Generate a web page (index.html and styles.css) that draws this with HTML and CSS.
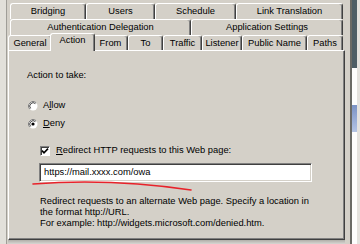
FILE: index.html
```html
<!DOCTYPE html>
<html>
<head>
<meta charset="utf-8">
<title>Action</title>
<link rel="stylesheet" href="styles.css">
</head>
<body>
<div class="screen">
  <div class="edge-left"></div>
  <div class="dialog">
    <div class="tabrow row-back row-first">
      <div class="tab w-bridging">Bridging</div>
      <div class="tab w-users">Users</div>
      <div class="tab w-schedule">Schedule</div>
      <div class="tab w-link">Link Translation</div>
    </div>
    <div class="tabrow row-back">
      <div class="tab w-auth">Authentication Delegation</div>
      <div class="tab w-app">Application Settings</div>
    </div>
    <div class="tabrow row-front">
      <div class="tab w-general">General</div>
      <div class="tab tab-active w-action">Action</div>
      <div class="tab w-from">From</div>
      <div class="tab w-to">To</div>
      <div class="tab w-traffic">Traffic</div>
      <div class="tab w-listener">Listener</div>
      <div class="tab w-public">Public Name</div>
      <div class="tab w-paths">Paths</div>
    </div>
    <div class="panel">
      <div class="label">Action to take:</div>
      <div class="option opt-allow">
        <svg class="radio" width="10" height="10" viewBox="0 0 10 10">
          <circle cx="5" cy="5" r="4.5" fill="#fff"/>
          <path d="M1.82 8.18 A4.5 4.5 0 0 1 8.18 1.82" fill="none" stroke="#808080" stroke-width="1"/>
          <path d="M2.6 7.4 A3.4 3.4 0 0 1 7.4 2.6" fill="none" stroke="#404040" stroke-width="1"/>
        </svg>
        <span>A<u>l</u>low</span>
      </div>
      <div class="option opt-deny">
        <svg class="radio" width="10" height="10" viewBox="0 0 10 10">
          <circle cx="5" cy="5" r="4.5" fill="#fff"/>
          <path d="M1.82 8.18 A4.5 4.5 0 0 1 8.18 1.82" fill="none" stroke="#808080" stroke-width="1"/>
          <path d="M2.6 7.4 A3.4 3.4 0 0 1 7.4 2.6" fill="none" stroke="#404040" stroke-width="1"/>
          <circle cx="5" cy="5" r="1.6" fill="#000"/>
        </svg>
        <span><u>D</u>eny</span>
      </div>
      <div class="check-row">
        <span class="checkbox">
          <svg width="8" height="8" viewBox="0 0 8 8"><path d="M1 3.6 L3 5.8 L7 1.6" fill="none" stroke="#000" stroke-width="1.6"/></svg>
        </span>
        <span><u>R</u>edirect HTTP requests to this Web page:</span>
      </div>
      <div class="textbox">https://mail.xxxx.com/owa</div>
      <div class="desc">Redirect requests to an alternate Web page. Specify a location in<br>the format http://URL.<br>For example: http://widgets.microsoft.com/denied.htm.</div>
    </div>
    <div class="shadow-bottom"></div>
  </div>
  <div class="edge-right">
    <div class="edge-gap"></div>
    <div class="edge-line"></div>
    <div class="edge-strip"></div>
    <div class="edge-light"></div>
  </div>
  <svg class="annotation" width="170" height="16" viewBox="28 177 170 16">
    <path d="M33 184 Q110 178 191 190" fill="none" stroke="#e8222a" stroke-width="1.6" stroke-linecap="round"/>
  </svg>
</div>
</body>
</html>
```

FILE: styles.css
```css
* { box-sizing: border-box; }
html, body { margin: 0; padding: 0; }
body {
  width: 360px;
  height: 244px;
  overflow: hidden;
  background: #d4d0c8;
  font-family: "Liberation Sans", Arial, sans-serif;
  font-size: 9.35px;
  color: #000;
}
.screen {
  position: relative;
  display: flex;
  width: 360px;
  height: 244px;
}
.edge-left {
  width: 8px;
  flex: 0 0 8px;
  background: linear-gradient(to right, #e2e0da 0 6px, #a09e98 6px 7px, #d4d0c8 7px);
}
.dialog {
  width: 337px;
  flex: 0 0 337px;
  display: flex;
  flex-direction: column;
}
.tabrow {
  display: flex;
  height: 16px;
  flex: 0 0 auto;
}
.row-first { margin-top: 3px; }
.row-back { padding-left: 2px; }
.row-front { height: 15px; }
.tab {
  height: 100%;
  border-top: 1px solid #fff;
  border-left: 1px solid #fff;
  border-right: 1px solid #404040;
  box-shadow: inset -1px 0 #808080;
  border-radius: 3px 3px 0 0;
  background: #d4d0c8;
  text-align: center;
  line-height: 15px;
  white-space: nowrap;
}
.row-front .tab { line-height: 14px; }
.row-front .tab-active {
  position: relative;
  z-index: 2;
  height: 18px;
  margin: -2px -2px -1px -2px;
  line-height: 13px;
}
.w-bridging { width: 76px; }
.w-users { width: 69px; }
.w-schedule { width: 81px; }
.w-link { width: 107px; }
.w-auth { width: 181px; }
.w-app { width: 152px; }
.w-general { width: 44px; }
.w-action { width: 45px; }
.w-from { width: 35px; }
.w-to { width: 35px; }
.w-traffic { width: 39px; }
.w-listener { width: 40px; }
.w-public { width: 65px; }
.w-paths { width: 36px; }

.panel {
  height: 190px;
  flex: 0 0 auto;
  border: 1px solid;
  border-color: #fff #404040 #404040 #fff;
  box-shadow: inset -1px -1px #808080;
  padding: 19px 0 0 18px;
  display: flex;
  flex-direction: column;
  align-items: flex-start;
  line-height: 11px;
}
.label { height: 11px; }
.option {
  display: flex;
  align-items: center;
  gap: 5px;
  height: 11px;
  margin-left: 1px;
}
.opt-allow { margin-top: 19px; }
.opt-deny { margin-top: 7px; }
.radio { display: block; flex: 0 0 auto; }
.check-row {
  display: flex;
  align-items: center;
  gap: 6px;
  height: 11px;
  margin-top: 16px;
  margin-left: 13px;
}
.checkbox {
  width: 10px;
  height: 10px;
  background: #fff;
  border: 1px solid;
  border-color: #808080 #fff #fff #808080;
  box-shadow: inset 1px 1px #404040;
  display: flex;
  align-items: center;
  justify-content: center;
}
.checkbox svg { display: block; }
.textbox {
  margin-top: 7px;
  margin-left: 12px;
  width: 273px;
  height: 19px;
  background: #fff;
  border: 1px solid;
  border-color: #808080 #fff #fff #808080;
  box-shadow: inset 1px 1px #404040, inset -1px -1px #d4d0c8;
  padding-left: 4px;
  line-height: 17px;
  white-space: nowrap;
}
.desc {
  margin-top: 14px;
  margin-left: 13px;
  white-space: nowrap;
  line-height: 11px;
}
.shadow-bottom {
  flex: 1 1 auto;
  background: linear-gradient(#b0aea8, #d8d6d2);
}
.edge-right {
  flex: 1 1 auto;
  display: flex;
}
.edge-gap { width: 5px; }
.edge-line { width: 2px; background: #6a6a66; }
.edge-strip {
  width: 5px;
  background:
    linear-gradient(#7a92c4, #b4c4e4) 0 105px / 100% 27px no-repeat,
    linear-gradient(#4e5e66 0 68px, #fdfdfd 68px);
}
.edge-light { flex: 1 1 auto; background: #e4e2de; }
.annotation {
  position: absolute;
  left: 28px;
  top: 177px;
}
```
